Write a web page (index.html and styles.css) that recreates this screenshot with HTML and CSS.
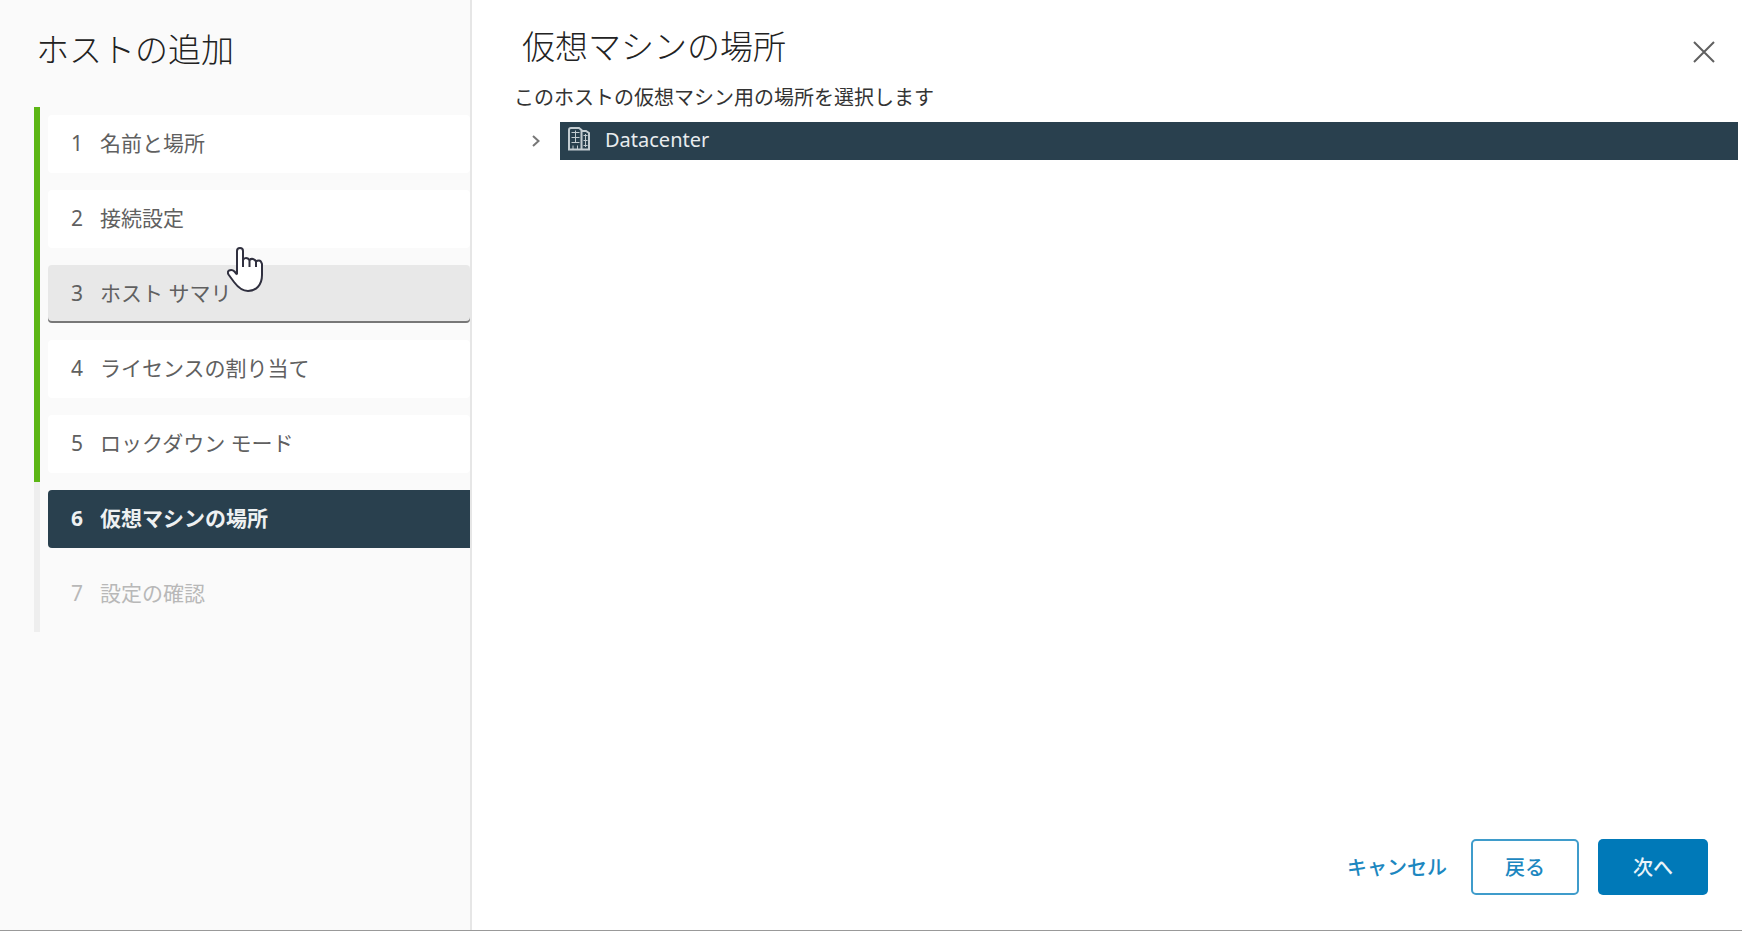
FILE: index.html
```html
<!DOCTYPE html>
<html lang="ja">
<head>
<meta charset="utf-8">
<title>ホストの追加</title>
<link rel="stylesheet" href="styles.css">
</head>
<body>
<div class="wizard">
  <aside class="sidebar">
    <h1 class="wizard-title">ホストの追加</h1>
    <ol class="steps">
      <li class="step done"><button class="step-button" type="button"><span class="num">1</span><span>名前と場所</span></button></li>
      <li class="step done"><button class="step-button" type="button"><span class="num">2</span><span>接続設定</span></button></li>
      <li class="step done hovered"><button class="step-button" type="button"><span class="num">3</span><span>ホスト サマリ</span></button>
        <svg class="pointer" viewBox="0 0 36 48" aria-hidden="true"><path d="M10 28.500V5Q10 2 13 2T16 5V14Q17 12 19 12T22.500 14Q24 12.500 26 13T29 15.500Q30 14.500 32 14.500T35 18V29C35 39 29 45 21 45C14 45 10 40 7 36L1.500 28.500Q0 26 2 24.500Q5 23 7.500 25.500L10 28.500"/><path d="M16 14V21M22.500 14V21M29 15V21"/></svg>
      </li>
      <li class="step done"><button class="step-button" type="button"><span class="num">4</span><span>ライセンスの割り当て</span></button></li>
      <li class="step done"><button class="step-button" type="button"><span class="num">5</span><span>ロックダウン モード</span></button></li>
      <li class="step current"><button class="step-button" type="button" aria-current="step"><span class="num">6</span><span>仮想マシンの場所</span></button></li>
      <li class="step pending"><button class="step-button" type="button" disabled><span class="num">7</span><span>設定の確認</span></button></li>
    </ol>
  </aside>
  <main class="content">
    <header class="page-header">
      <h2 class="page-title">仮想マシンの場所</h2>
      <button class="close" type="button" aria-label="閉じる"><svg viewBox="0 0 22 22" aria-hidden="true"><path d="M1 1L21 21M21 1L1 21"/></svg></button>
    </header>
    <p class="description">このホストの仮想マシン用の場所を選択します</p>
    <div class="tree" role="tree">
      <button class="expand" type="button" aria-label="展開"><svg viewBox="0 0 8 12" aria-hidden="true"><path d="M1 1L6.500 6L1 11"/></svg></button>
      <div class="tree-node" role="treeitem" aria-selected="true">
        <svg class="datacenter" viewBox="0 0 22 24" aria-hidden="true"><path class="outline-stroke" d="M1 22.500V3Q1 1 3 1H11L13.500 3V22.500ZM13.500 4H18L21 6V22.500H13.500"/><path d="M3.500 5.500H11.500M3.500 10.500H11.500M3.500 15.500H11.500M5 18.500V22M9.500 18.500V22M7.500 3.500V16M15.500 8.500H19.500M15.500 13.500H19.500M15.500 18.500H19.500M17.500 7V20"/></svg>
        <span>Datacenter</span>
      </div>
    </div>
    <footer class="actions">
      <button class="action link" type="button">キャンセル</button>
      <button class="action outline" type="button">戻る</button>
      <button class="action primary" type="button">次へ</button>
    </footer>
  </main>
</div>
</body>
</html>
```
FILE: styles.css
```css
* { box-sizing: border-box; }
body {
  margin: 0;
  background: #fff;
  color: #606060;
  font-family: "Noto Sans", "Noto Sans CJK JP", sans-serif;
  font-size: 20px;
}
button {
  margin: 0;
  padding: 0;
  border: 0;
  background: none;
  color: inherit;
  font: inherit;
  cursor: pointer;
}
svg { display: block; fill: none; stroke: currentColor; }
.wizard {
  display: grid;
  grid-template-columns: 472px 1fr;
  min-height: 100vh;
  border-bottom: 1px solid #999;
}
.sidebar {
  padding: 24px 0 0 34px;
  background: #fafafa;
  border-right: 2px solid #e6e6e6;
}
.wizard-title, .page-title {
  margin: 0;
  color: #222;
  font-family: "Noto Sans CJK JP", sans-serif;
  font-size: 33px;
  font-weight: 300;
  line-height: 48px;
}
.wizard-title { padding-left: 2px; margin-bottom: 35px; }
.steps { margin: 0; padding: 0; list-style: none; }
.step {
  position: relative;
  height: 75px;
  padding: 8px 0 9px 8px;
  border-left: 6px solid #eee;
}
.step.done { border-left-color: #5cb615; }
.step-button {
  display: flex;
  align-items: center;
  gap: 16px;
  width: 100%;
  height: 58px;
  padding: 0 0 3px 22px;
  border-radius: 4px;
  background: #fff;
  font-size: 21px;
  line-height: 32px;
  text-align: left;
}
.num { width: 14px; text-align: center; }
.hovered .step-button { background: #e8e8e8; box-shadow: inset 0 -2px #777; }
.current .step-button {
  border-radius: 4px 0 0 4px;
  background: #29404e;
  color: #eef1f2;
  font-weight: 600;
}
.current .num { font-weight: 700; }
.pending .step-button { background: none; color: #b8b8b8; }
.pointer {
  position: absolute;
  left: 187px;
  top: -11px;
  width: 36px;
  height: 48px;
  fill: #fff;
  stroke: #30303f;
  stroke-width: 2;
}
.content {
  display: flex;
  flex-direction: column;
  min-width: 0;
  padding: 21px 4px 35px 42px;
}
.page-header {
  display: flex;
  justify-content: space-between;
  align-items: center;
  padding: 0 23px 0 8px;
}
.close { margin-top: 14px; }
.close svg { width: 22px; height: 22px; stroke-width: 2; }
.description {
  margin: 13px 0 8px;
  color: #333;
  line-height: 32px;
}
.tree { display: flex; align-items: center; }
.expand { width: 46px; padding-left: 18px; }
.expand svg { width: 8px; height: 12px; stroke-width: 2; color: #777; }
.tree-node {
  display: flex;
  flex: 1;
  align-items: center;
  gap: 15px;
  height: 38px;
  padding: 0 8px 4px;
  background: #29404e;
  color: #e8ecee;
}
.datacenter { width: 22px; height: 24px; color: #c3ccd1; }
.outline-stroke { stroke-width: 2; }
.actions {
  display: flex;
  justify-content: flex-end;
  align-items: center;
  gap: 19px;
  margin-top: auto;
  padding-right: 30px;
}
.action {
  width: 110px;
  height: 56px;
  padding-bottom: 2px;
  border-radius: 5px;
  color: #1c87c0;
  font-weight: 500;
}
.action.link { width: auto; padding-right: 5px; }
.action.outline { width: 108px; border: 2px solid #3f9ccb; }
.action.primary { background: #0079b8; color: #eaf4f9; }
```
